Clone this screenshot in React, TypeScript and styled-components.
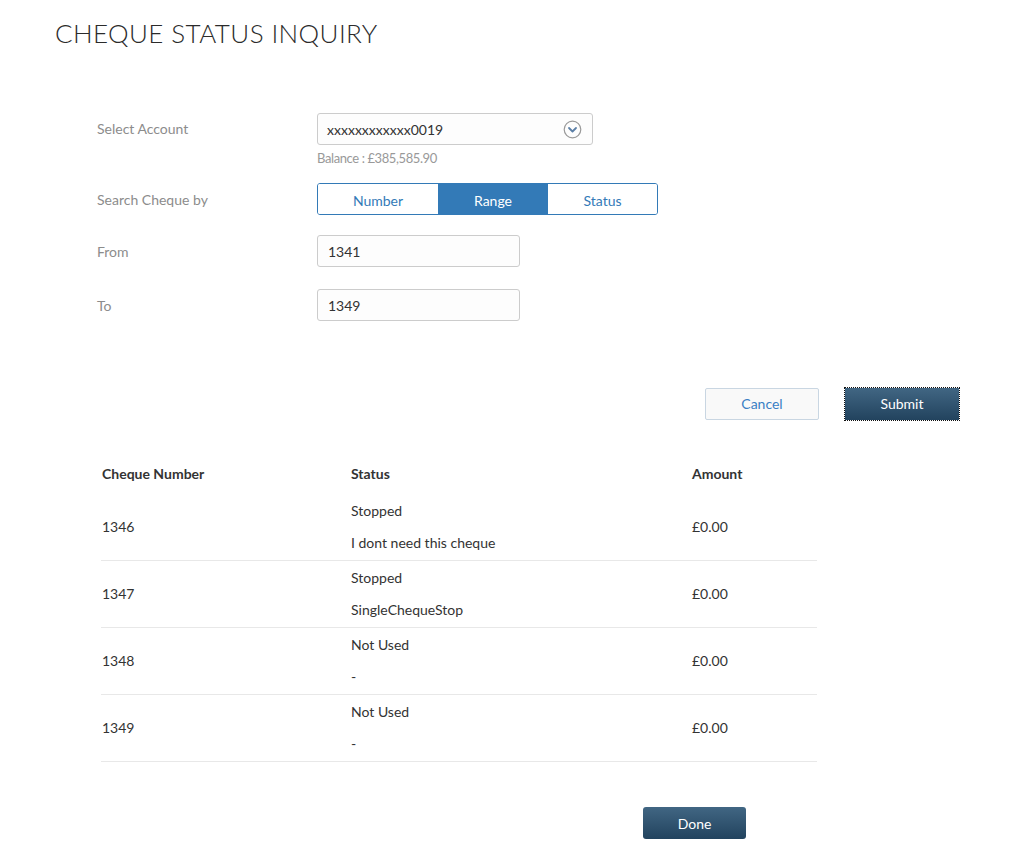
import React from "react";
import styled, { createGlobalStyle } from "styled-components";

const GlobalStyle = createGlobalStyle`
  html, body {
    margin: 0;
    padding: 0;
    background: #ffffff;
    font-family: Lato, "Open Sans", "Liberation Sans", sans-serif;
    color: #333333;
  }
  * { box-sizing: border-box; }
`;

const Page = styled.div`
  width: 1031px;
  padding-top: 17px;
  padding-bottom: 14px;
`;

const Title = styled.h1`
  margin: 0 0 0 55px;
  font-family: Lato, sans-serif;
  font-weight: 300;
  font-size: 26px;
  line-height: 32px;
  letter-spacing: 0.4px;
  color: #2b2b2b;
`;

const Form = styled.div`
  margin: 64px 0 0 97px;
  display: flex;
  flex-direction: column;
`;

const Row = styled.div<{ $mt?: number }>`
  display: grid;
  grid-template-columns: 220px auto;
  margin-top: ${(p) => p.$mt ?? 0}px;
`;

const Label = styled.div<{ $lh?: number }>`
  font-size: 14px;
  line-height: ${(p) => p.$lh ?? 34}px;
  height: 32px;
  color: #8c8c8c;
`;

const FieldCol = styled.div`
  display: flex;
  flex-direction: column;
  align-items: flex-start;
`;

const SelectBox = styled.div`
  width: 276px;
  height: 32px;
  border: 1px solid #cccccc;
  border-radius: 3px;
  background: #fdfdfd;
  display: flex;
  align-items: center;
  justify-content: space-between;
  padding: 0 10px 0 9px;
  font-size: 14px;
  color: #333333;
`;

const Balance = styled.div`
  margin-top: 4px;
  font-size: 13px;
  letter-spacing: -0.4px;
  line-height: 18px;
  color: #999999;
`;

const Segmented = styled.div`
  width: 341px;
  height: 32px;
  border: 1px solid #337ab7;
  border-radius: 3px;
  display: grid;
  grid-template-columns: 120px 110px 1fr;
  overflow: hidden;
`;

const Segment = styled.div<{ $active?: boolean }>`
  display: flex;
  align-items: center;
  justify-content: center;
  padding-top: 2px;
  font-size: 14px;
  background: ${(p) => (p.$active ? "#337ab7" : "#ffffff")};
  color: ${(p) => (p.$active ? "#ffffff" : "#337ab7")};
`;

const TextInput = styled.div`
  width: 203px;
  height: 32px;
  border: 1px solid #cccccc;
  border-radius: 3px;
  background: #fdfdfd;
  display: flex;
  align-items: center;
  padding-left: 10px;
  font-size: 14px;
  color: #333333;
`;

const Actions = styled.div`
  margin: 67px 0 0 705px;
  display: flex;
  align-items: center;
  gap: 26px;
`;

const CancelButton = styled.button`
  width: 114px;
  height: 32px;
  padding: 0 0 2px;
  border: 1px solid #c9d6e2;
  border-radius: 2px;
  background: #f9f9f9;
  color: #3a7fc4;
  font-family: Lato, sans-serif;
  font-size: 14px;
  cursor: pointer;
`;

const PrimaryButton = styled.button<{ $w: number; $focus?: boolean }>`
  width: ${(p) => p.$w}px;
  height: 32px;
  padding: 0 0 ${(p) => (p.$focus ? 2 : 0)}px;
  border: none;
  border-radius: ${(p) => (p.$focus ? 0 : 3)}px;
  background: linear-gradient(to bottom, #416683 0%, #22435e 100%);
  color: #ffffff;
  font-family: Lato, sans-serif;
  font-size: 14px;
  cursor: pointer;
  outline: ${(p) => (p.$focus ? "1px dotted #111" : "none")};
  outline-offset: 0;
`;

const Table = styled.div`
  margin: 36px 0 0 101px;
  width: 716px;
`;

const TableRow = styled.div<{ $head?: boolean }>`
  display: grid;
  grid-template-columns: 249px 341px 1fr;
  align-items: center;
  border-bottom: ${(p) => (p.$head ? "none" : "1px solid #e8e8e8")};
  height: ${(p) => (p.$head ? 38 : 67)}px;
  padding-bottom: ${(p) => (p.$head ? 2 : 0)}px;
  font-size: 14px;
  font-weight: ${(p) => (p.$head ? 700 : 400)};
  color: #333333;
`;

const Cell = styled.div`
  padding-left: 1px;
  line-height: 20px;
`;

const StatusCell = styled.div`
  padding-left: 1px;
  display: flex;
  flex-direction: column;
  gap: 12px;
  line-height: 20px;
`;

const DoneRow = styled.div`
  margin: 45px 0 0 643px;
`;

const ChevronIcon = () => (
  <svg width="19" height="19" viewBox="0 0 19 19">
    <circle cx="9.5" cy="9.5" r="8.3" fill="none" stroke="#9a9a9a" strokeWidth="1.2" />
    <path d="M6 8 L9.5 11.5 L13 8" fill="none" stroke="#5b7fa6" strokeWidth="1.8" strokeLinecap="round" strokeLinejoin="round" />
  </svg>
);

const rows = [
  { num: "1346", status: "Stopped", reason: "I dont need this cheque", amount: "£0.00" },
  { num: "1347", status: "Stopped", reason: "SingleChequeStop", amount: "£0.00" },
  { num: "1348", status: "Not Used", reason: "-", amount: "£0.00" },
  { num: "1349", status: "Not Used", reason: "-", amount: "£0.00" },
];

export default function App() {
  return (
    <Page>
      <GlobalStyle />
      <Title>CHEQUE STATUS INQUIRY</Title>
      <Form>
        <Row>
          <Label $lh={32}>Select Account</Label>
          <FieldCol>
            <SelectBox>
              <span>xxxxxxxxxxxx0019</span>
              <ChevronIcon />
            </SelectBox>
            <Balance>Balance : £385,585.90</Balance>
          </FieldCol>
        </Row>
        <Row $mt={16}>
          <Label>Search Cheque by</Label>
          <FieldCol>
            <Segmented>
              <Segment>Number</Segment>
              <Segment $active>Range</Segment>
              <Segment>Status</Segment>
            </Segmented>
          </FieldCol>
        </Row>
        <Row $mt={20}>
          <Label>From</Label>
          <FieldCol>
            <TextInput>1341</TextInput>
          </FieldCol>
        </Row>
        <Row $mt={22}>
          <Label>To</Label>
          <FieldCol>
            <TextInput>1349</TextInput>
          </FieldCol>
        </Row>
      </Form>
      <Actions>
        <CancelButton>Cancel</CancelButton>
        <PrimaryButton $w={114} $focus>Submit</PrimaryButton>
      </Actions>
      <Table>
        <TableRow $head>
          <Cell>Cheque Number</Cell>
          <Cell>Status</Cell>
          <Cell>Amount</Cell>
        </TableRow>
        {rows.map((r) => (
          <TableRow key={r.num}>
            <Cell>{r.num}</Cell>
            <StatusCell>
              <span>{r.status}</span>
              <span>{r.reason}</span>
            </StatusCell>
            <Cell>{r.amount}</Cell>
          </TableRow>
        ))}
      </Table>
      <DoneRow>
        <PrimaryButton $w={103}>Done</PrimaryButton>
      </DoneRow>
    </Page>
  );
}
